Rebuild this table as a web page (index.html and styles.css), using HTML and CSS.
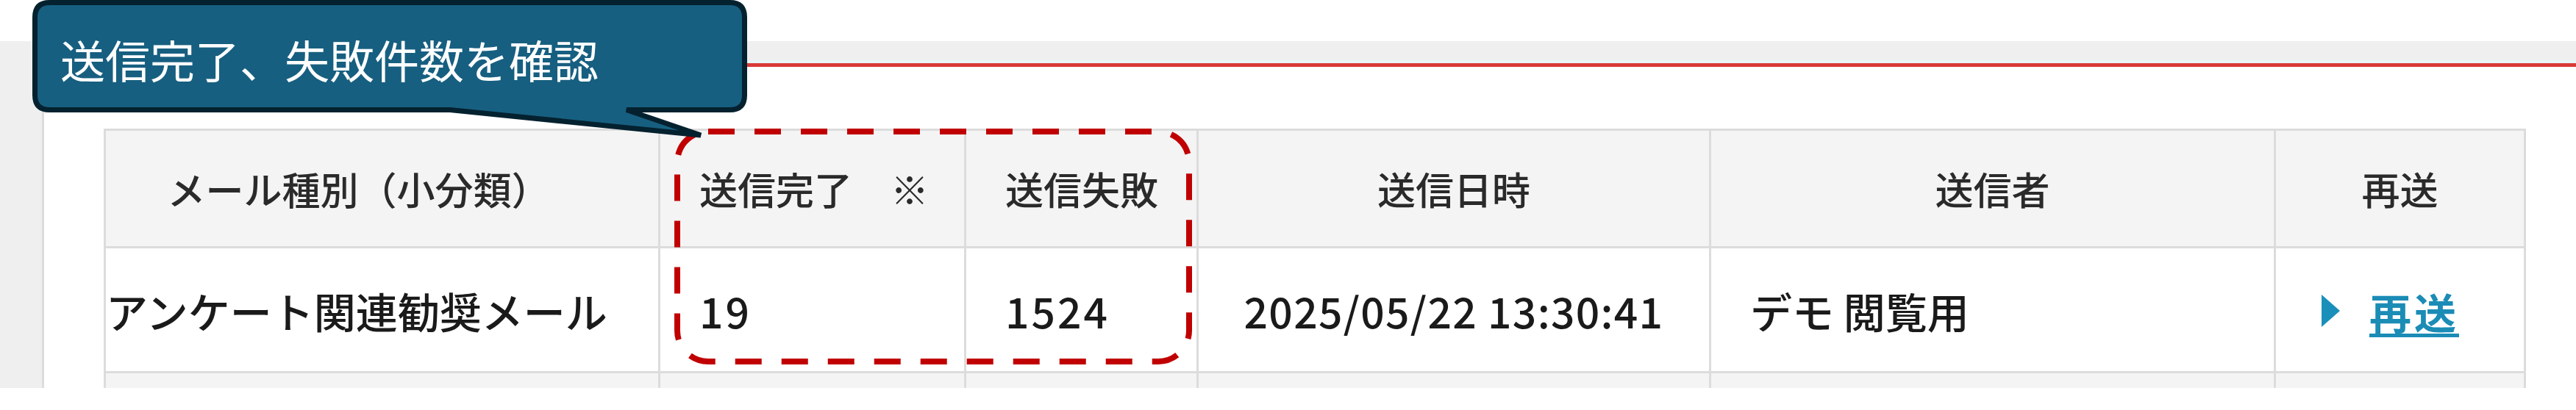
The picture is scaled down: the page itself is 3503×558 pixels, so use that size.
FILE: index.html
```html
<!DOCTYPE html>
<html>
<head>
    <title>送信履歴</title>
    <link rel="stylesheet" href="styles.css">
</head>
<body>
    <div class="topbar"></div>
    <div class="main">
        <div class="panel">
            <table class="history">
                <colgroup>
                    <col class="c-kind">
                    <col class="c-done">
                    <col class="c-fail">
                    <col class="c-date">
                    <col class="c-sender">
                    <col class="c-resend">
                </colgroup>
                <thead>
                    <tr>
                        <th class="th-kind">メール種別（小分類）</th>
                        <th class="th-left">送信完了　※</th>
                        <th class="th-left">送信失敗</th>
                        <th>送信日時</th>
                        <th>送信者</th>
                        <th>再送</th>
                    </tr>
                </thead>
                <tbody>
                    <tr>
                        <td class="td-kind">アンケート関連勧奨メール</td>
                        <td class="num">19</td>
                        <td class="num">1524</td>
                        <td class="date">2025/05/22 13:30:41</td>
                        <td class="sender">デモ 閲覧用</td>
                        <td class="resend"><a href="#" class="resend-link"><span class="tri"></span><span class="resend-text">再送</span></a></td>
                    </tr>
                    <tr class="stripe">
                        <td></td><td></td><td></td><td></td><td></td><td></td>
                    </tr>
                </tbody>
            </table>
        </div>
    </div>

    <!-- dashed highlight round the count columns -->
    <svg class="highlight" width="1700" height="520" viewBox="0 0 1700 520">
        <rect x="921" y="179" width="696" height="313" rx="42" ry="42"
              fill="none" stroke="#c00000" stroke-width="8" stroke-dasharray="36 27"/>
    </svg>

    <!-- speech bubble -->
    <div class="callout">
        <svg class="callout-shape" width="1030" height="200" viewBox="0 0 1030 200">
            <path d="M67.5 3.5 H992.5 Q1012.5 3.5 1012.5 23.5 V129.5 Q1012.5 149.5 992.5 149.5 H852 L953 184 L612 149.5 H67.5 Q47.5 149.5 47.5 129.5 V23.5 Q47.5 3.5 67.5 3.5 Z"
                  fill="#175f80" stroke="#04212f" stroke-width="7" stroke-linejoin="miter"/>
        </svg>
        <div class="callout-text">送信完了、失敗件数を確認</div>
    </div>
</body>
</html>
```

FILE: styles.css
```css
html, body {
    margin: 0;
    padding: 0;
    height: 558px;
    overflow: hidden;
}
body {
    font-family: "Noto Sans CJK JP", "Noto Sans", sans-serif;
    background: #ffffff;
    color: #1a1a1a;
    position: relative;
}
.topbar {
    height: 56px;
    background: #ffffff;
}
.main {
    background: #efefef;
    padding: 30px 0 0 57px;
    height: 472px;
    box-sizing: border-box;
}
.panel {
    background: #ffffff;
    border-left: 3px solid #dcdcdc;
    border-top: 5px solid #d83a37;
    box-shadow: 0 -4px 0 #e8f6f6;
    height: 100%;
    padding: 84px 0 0 81px;
    box-sizing: border-box;
    overflow: hidden;
}
.history {
    border-collapse: collapse;
    table-layout: fixed;
    width: 3291px;
    font-size: 57px;
    font-weight: 500;
    border: 3px solid #dcdcdc;
}
.c-kind { width: 754px; }
.c-done { width: 416px; }
.c-fail { width: 316px; }
.c-date { width: 697px; }
.c-sender { width: 768px; }
.c-resend { width: 340px; }
.history th,
.history td {
    border: 3px solid #dcdcdc;
    padding: 0;
    white-space: nowrap;
    overflow: hidden;
    vertical-align: middle;
}
.history thead tr {
    height: 160px;
}
.history th {
    background: #f4f4f4;
    font-size: 52px;
    font-weight: 500;
    color: #2a2a2a;
    text-align: center;
}
.history th.th-kind {
    padding-right: 64px;
}
.history th.th-left {
    text-align: left;
    padding-left: 53px;
}
.history tbody tr {
    height: 170px;
}
.history td.td-kind {
    padding-left: 0;
}
.history td.num {
    padding-left: 53px;
    letter-spacing: 3px;
}
.history td.date {
    text-align: center;
    letter-spacing: 1.3px;
}
.history td.sender {
    padding-left: 53px;
}
.history td.resend {
    padding-left: 62px;
}
.history tr.stripe td {
    background: #f4f4f4;
}
.resend-link {
    color: #1b8cb6;
    display: inline-flex;
    align-items: center;
    text-decoration: none;
}
.tri {
    width: 0;
    height: 0;
    border-top: 22px solid transparent;
    border-bottom: 22px solid transparent;
    border-left: 25px solid #1a8fba;
    margin-right: 40px;
}
.resend-text {
    font-size: 57px;
    font-weight: bold;
    letter-spacing: 4px;
    text-decoration: underline;
    text-underline-offset: 6px;
}
.highlight {
    position: absolute;
    left: 0;
    top: 0;
}
.callout {
    position: absolute;
    left: 0;
    top: 0;
    width: 1030px;
    height: 200px;
}
.callout-shape {
    position: absolute;
    left: 0;
    top: 0;
}
.callout-text {
    position: relative;
    color: #ffffff;
    font-size: 61px;
    line-height: 1;
    padding: 50px 0 0 82px;
    white-space: nowrap;
}
```
